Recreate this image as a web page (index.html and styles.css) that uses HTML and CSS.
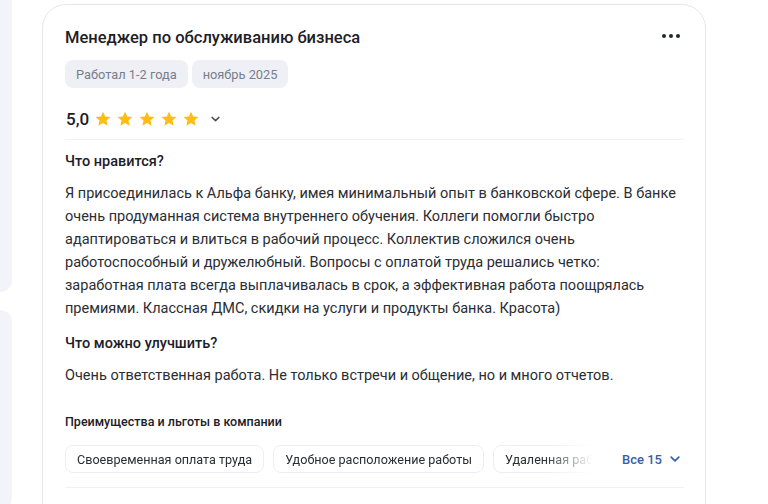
FILE: index.html
```html
<!DOCTYPE html>
<html lang="ru">
<head>
<meta charset="utf-8">
<link rel="stylesheet" href="styles.css">
</head>
<body>
<div class="page">
  <aside class="side">
    <div class="side-block side-top"></div>
    <div class="side-block side-bottom"></div>
  </aside>
  <article class="card">
    <header class="card-head">
      <h2 class="title">Менеджер по обслуживанию бизнеса</h2>
      <button class="more" aria-label="Ещё"><span></span><span></span><span></span></button>
    </header>
    <div class="tags">
      <span class="tag">Работал 1-2 года</span>
      <span class="tag">ноябрь 2025</span>
    </div>
    <div class="rating">
      <span class="score">5,0</span>
      <span class="stars">
        <svg viewBox="0 0 24 24"><path d="M12 2.2l2.9 6.6 7.1.6-5.4 4.7 1.6 7-6.2-3.7-6.2 3.7 1.6-7L2 9.4l7.1-.6z"/></svg>
        <svg viewBox="0 0 24 24"><path d="M12 2.2l2.9 6.6 7.1.6-5.4 4.7 1.6 7-6.2-3.7-6.2 3.7 1.6-7L2 9.4l7.1-.6z"/></svg>
        <svg viewBox="0 0 24 24"><path d="M12 2.2l2.9 6.6 7.1.6-5.4 4.7 1.6 7-6.2-3.7-6.2 3.7 1.6-7L2 9.4l7.1-.6z"/></svg>
        <svg viewBox="0 0 24 24"><path d="M12 2.2l2.9 6.6 7.1.6-5.4 4.7 1.6 7-6.2-3.7-6.2 3.7 1.6-7L2 9.4l7.1-.6z"/></svg>
        <svg viewBox="0 0 24 24"><path d="M12 2.2l2.9 6.6 7.1.6-5.4 4.7 1.6 7-6.2-3.7-6.2 3.7 1.6-7L2 9.4l7.1-.6z"/></svg>
      </span>
      <svg class="chev" viewBox="0 0 10 6"><path d="M1.2 1.2L5 4.8l3.8-3.6"/></svg>
    </div>
    <hr class="divider">
    <section class="block">
      <h3 class="block-title">Что нравится?</h3>
      <p class="block-text">Я присоединилась к Альфа банку, имея минимальный опыт в банковской сфере. В банке очень продуманная система внутреннего обучения. Коллеги помогли быстро адаптироваться и влиться в рабочий процесс. Коллектив сложился очень работоспособный и дружелюбный. Вопросы с оплатой труда решались четко: заработная плата всегда выплачивалась в срок, а эффективная работа поощрялась премиями. Классная ДМС, скидки на услуги и продукты банка. Красота)</p>
    </section>
    <section class="block">
      <h3 class="block-title">Что можно улучшить?</h3>
      <p class="block-text">Очень ответственная работа. Не только встречи и общение, но и много отчетов.</p>
    </section>
    <section class="perks">
      <h4 class="perks-title">Преимущества и льготы в компании</h4>
      <div class="perks-row">
        <div class="chips">
          <span class="chip">Своевременная оплата труда</span>
          <span class="chip">Удобное расположение работы</span>
          <span class="chip">Удаленная работа</span>
        </div>
        <button class="all">Все 15
          <svg viewBox="0 0 10 6"><path d="M1.2 1.2L5 4.8l3.8-3.6"/></svg>
        </button>
      </div>
    </section>
    <hr class="divider bottom">
  </article>
</div>
</body>
</html>
```

FILE: styles.css
```css
* { box-sizing: border-box; }
html, body { margin: 0; padding: 0; background: #fff; }
body {
  font-family: Roboto, "Noto Sans", Arial, sans-serif;
  color: #1f2229;
  overflow: hidden;
  height: 504px;
}
.page {
  display: flex;
  gap: 30px;
  align-items: flex-start;
}
.side {
  width: 12px;
  flex: none;
  display: flex;
  flex-direction: column;
  gap: 18px;
}
.side-block { background: #f3f4f9; }
.side-top {
  height: 312px;
  margin-top: -20px;
  border-radius: 0 16px 16px 0;
}
.side-bottom {
  height: 200px;
  border-radius: 0 16px 16px 0;
}
.card {
  width: 664px;
  margin-top: 4px;
  border: 1px solid #e4e7ee;
  border-radius: 24px;
  padding: 21px 22px 40px 22px;
  min-height: 560px;
}
.card-head {
  display: flex;
  align-items: center;
  justify-content: space-between;
}
.title {
  margin: 0;
  font-size: 16.5px;
  line-height: 24px;
  font-weight: 500;
  color: #1d2027;
}
.more {
  border: 0;
  background: none;
  padding: 0;
  margin-right: 3px;
  display: flex;
  gap: 3px;
  align-items: center;
  height: 24px;
  margin-top: -4px;
}
.more span {
  width: 4px;
  height: 4px;
  border-radius: 50%;
  background: #23262d;
}
.tags {
  display: flex;
  gap: 4px;
  margin-top: 10px;
}
.tag {
  height: 28px;
  display: inline-flex;
  align-items: center;
  padding: 0 11px;
  background: #eef0f5;
  border-radius: 8px;
  font-size: 12.8px;
  color: #777e8c;
}
.rating {
  display: flex;
  align-items: center;
  height: 24px;
  margin-top: 19px;
}
.score {
  font-size: 17px;
  font-weight: 500;
  color: #1d2027;
  margin-left: 1px;
}
.stars {
  display: flex;
  gap: 4px;
  margin-left: 5px;
}
.stars svg {
  width: 18px;
  height: 18px;
  fill: #fdbe13;
}
.chev {
  width: 9px;
  height: 6px;
  margin-left: 11px;
  fill: none;
  stroke: #4b4f58;
  stroke-width: 1.6;
  stroke-linecap: round;
  stroke-linejoin: round;
}
.divider {
  border: 0;
  height: 1px;
  background: #f0f1f5;
  margin: 8px 0 0 0;
  width: 619px;
}
.block { margin-top: 11px; }
.block + .block { margin-top: 13px; }
.block-title {
  margin: 0;
  font-size: 14.5px;
  line-height: 22px;
  font-weight: 500;
  color: #1d2027;
}
.block-text {
  margin: 9px 0 0 0;
  font-size: 14.5px;
  line-height: 23px;
  color: #2a2d34;
  width: 615px;
}
.perks { margin-top: 26px; }
.perks-title {
  margin: 0;
  font-size: 12.5px;
  line-height: 18px;
  font-weight: 500;
  color: #1d2027;
}
.perks-row {
  display: flex;
  align-items: center;
  margin-top: 14px;
  width: 619px;
}
.chips {
  display: flex;
  gap: 9px;
  width: 527px;
  overflow: hidden;
  flex: none;
  -webkit-mask-image: linear-gradient(to right, #000 480px, transparent 527px);
  mask-image: linear-gradient(to right, #000 480px, transparent 527px);
}
.chip {
  flex: none;
  height: 28px;
  display: inline-flex;
  align-items: center;
  padding: 0 11px;
  border: 1px solid #eceef3;
  border-radius: 8px;
  font-size: 12.6px;
  color: #2a2d34;
  background: #fff;
}
.all {
  border: 0;
  background: none;
  padding: 0;
  margin-left: 30px;
  display: flex;
  align-items: center;
  gap: 8px;
  white-space: nowrap;
  font-family: inherit;
  font-size: 13px;
  font-weight: 500;
  color: #3a5ca8;
}
.all svg {
  width: 10px;
  height: 6px;
  fill: none;
  stroke: #3a5ca8;
  stroke-width: 1.7;
  stroke-linecap: round;
  stroke-linejoin: round;
}
.divider.bottom { margin-top: 14px; }
```
